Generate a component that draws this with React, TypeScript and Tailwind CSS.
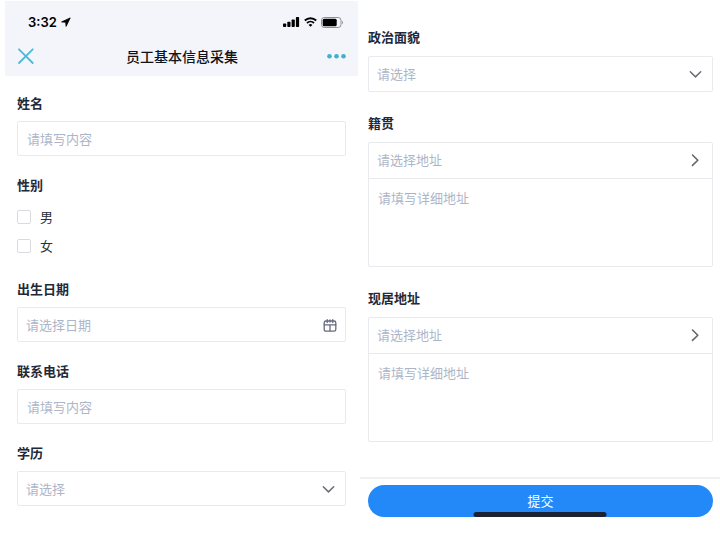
import type { ReactNode } from "react";

const fieldBox =
  "block w-full rounded-xs border border-[#e9eaed] bg-white text-[13px] text-[#adb6c8] outline-none placeholder:text-[#adb6c8] placeholder:opacity-100";

function ChevronDown() {
  return (
    <svg
      className="pointer-events-none absolute top-1/2 right-2.5 h-3.5 w-3.5 -translate-y-1/2"
      viewBox="0 0 14 14"
      fill="none"
      stroke="#6b6e76"
      strokeWidth="1.5"
      strokeLinecap="round"
      strokeLinejoin="round"
      aria-hidden="true"
    >
      <path d="M1.3 4.7 6.5 9.9 11.7 4.7" />
    </svg>
  );
}

function ChevronRight() {
  return (
    <svg
      className="h-3.5 w-3.5"
      viewBox="0 0 14 14"
      fill="none"
      stroke="#63666d"
      strokeWidth="1.6"
      strokeLinecap="round"
      strokeLinejoin="round"
      aria-hidden="true"
    >
      <path d="M4.5 2 9.8 7.2 4.5 12.4" />
    </svg>
  );
}

function Label({ id, children }: { id: string; children: ReactNode }) {
  return (
    <label htmlFor={id} className="block text-[13px] leading-5 font-bold text-[#1f2937]">
      {children}
    </label>
  );
}

function TextField({ id, label }: { id: string; label: string }) {
  return (
    <div className="flex flex-col gap-2">
      <Label id={id}>{label}</Label>
      <input id={id} type="text" placeholder="请填写内容" className={`${fieldBox} h-[35px] px-[9px] pb-px`} />
    </div>
  );
}

function SelectBox({ id, className }: { id: string; className: string }) {
  return (
    <div className="relative">
      <select id={id} className={`${fieldBox} ${className} appearance-none px-2`} defaultValue="">
        <option value="">请选择</option>
      </select>
      <ChevronDown />
    </div>
  );
}

function AddressField({ id, label }: { id: string; label: string }) {
  return (
    <div className="flex flex-col gap-[9px]">
      <Label id={id}>{label}</Label>
      <div className="rounded-xs border border-[#e9eaed] text-[13px] text-[#adb6c8]">
        <button
          type="button"
          className="flex h-9 w-full items-center justify-between border-b border-[#e9eaed] pr-2.5 pb-0.5 pl-2"
        >
          <span>请选择地址</span>
          <ChevronRight />
        </button>
        <textarea
          id={id}
          placeholder="请填写详细地址"
          className="block h-[87px] w-full resize-none px-[9px] py-[9px] leading-5 outline-none placeholder:text-[#adb6c8] placeholder:opacity-100"
        />
      </div>
    </div>
  );
}

function StatusBar() {
  return (
    <div className="flex h-[38px] items-center justify-between pt-1 pr-3.5 pl-[23px] text-black">
      <div className="flex items-center gap-1">
        <span className="font-[Inter,sans-serif] text-[13px] leading-5 font-semibold">3:32</span>
        <svg className="h-2.5 w-2.5" viewBox="0 0 10 10" aria-hidden="true">
          <path d="M9.2.9.6 4.9l4.1.4.4 4.1z" fill="#000" stroke="#000" strokeWidth=".8" strokeLinejoin="round" />
        </svg>
      </div>
      <div className="flex items-center gap-1">
        <svg className="h-2.5 w-[17px]" viewBox="0 0 17 10" aria-hidden="true">
          <rect x="0" y="6.6" width="3.2" height="3.4" rx=".7" />
          <rect x="4.3" y="4.8" width="3.2" height="5.2" rx=".7" />
          <rect x="8.6" y="2.6" width="3.2" height="7.4" rx=".7" />
          <rect x="12.9" y="0" width="3.2" height="10" rx=".7" />
        </svg>
        <svg className="h-2.5 w-[13px]" viewBox="0 0 13 10" fill="none" stroke="#000" aria-hidden="true">
          <path d="M.8 3.5a8.2 8.2 0 0 1 11.4 0" strokeWidth="1.9" />
          <path d="M3 6a5 5 0 0 1 7 0" strokeWidth="1.8" />
          <path d="M6.5 9.8 4.6 7.9a2.8 2.8 0 0 1 3.8 0z" fill="#000" stroke="none" />
        </svg>
        <svg className="h-[11px] w-[23px]" viewBox="0 0 23 11" aria-hidden="true">
          <rect x=".5" y=".5" width="19.5" height="10" rx="2.8" fill="none" stroke="#8d8f96" />
          <rect x="1.7" y="1.7" width="14" height="7.6" rx="1.5" />
          <path d="M21.2 3.8c1.2.5 1.2 2.9 0 3.4z" fill="#8d8f96" />
        </svg>
      </div>
    </div>
  );
}

function NavBar() {
  return (
    <div className="flex h-[37px] items-center justify-between pr-[11px] pb-[3px] pl-3">
      <button type="button" aria-label="关闭" className="flex w-5 items-center">
        <svg className="h-[18px] w-[18px]" viewBox="0 0 18 18" stroke="#4cb8da" strokeWidth="1.8" strokeLinecap="round" aria-hidden="true">
          <path d="M2 2.3 15.7 16M15.7 2.3 2 16" />
        </svg>
      </button>
      <h1 className="text-[14px] leading-5 font-medium text-[#111318]">员工基本信息采集</h1>
      <button type="button" aria-label="更多" className="flex w-5 items-center">
        <svg className="h-1.5 w-5" viewBox="0 0 20 6" fill="#3fb0cd" aria-hidden="true">
          <circle cx="2.5" cy="3.2" r="2.3" />
          <circle cx="9.5" cy="3.2" r="2.3" />
          <circle cx="16.5" cy="3.2" r="2.3" />
        </svg>
      </button>
    </div>
  );
}

function CheckRow({ id, label }: { id: string; label: string }) {
  return (
    <div className="flex h-7 items-center gap-[9px]">
      <input
        id={id}
        type="checkbox"
        className="h-3.5 w-3.5 appearance-none rounded-xs border border-[#d9dbdf] bg-white checked:bg-[#2389f8]"
      />
      <label htmlFor={id} className="text-[13px] leading-5 text-[#2b313b]">
        {label}
      </label>
    </div>
  );
}

function DateField() {
  return (
    <div className="flex flex-col gap-2">
      <Label id="birth">出生日期</Label>
      <div className="relative">
        <input id="birth" type="text" placeholder="请选择日期" className={`${fieldBox} h-[35px] px-2`} />
        <svg
          className="pointer-events-none absolute top-1/2 right-[9px] h-3.5 w-3.5 -translate-y-1/2"
          viewBox="0 0 14 14"
          fill="none"
          stroke="#666b7d"
          strokeWidth="1.3"
          strokeLinecap="round"
          aria-hidden="true"
        >
          <rect x="1.2" y="3" width="11.6" height="10.2" rx="1.8" />
          <path d="M1.2 6.8h11.6M4.2 1.6v3M9.8 1.6v3M7 6.8v6" />
          <path d="M7 2v2" />
        </svg>
      </div>
    </div>
  );
}

export default function App() {
  return (
    <form className="grid min-h-screen grid-cols-2 bg-white font-['Noto_Sans_CJK_SC',sans-serif]">
      <section className="pt-px pr-0.5 pl-[5px]">
        <header className="bg-[#f4f5fa]">
          <StatusBar />
          <NavBar />
        </header>
        <div className="flex flex-col gap-[19px] px-3 pt-[17px]">
          <TextField id="name" label="姓名" />
          <fieldset className="flex flex-col">
            <legend className="mb-2 text-[13px] leading-5 font-bold text-[#1f2937]">性别</legend>
            <div className="flex flex-col gap-px">
              <CheckRow id="male" label="男" />
              <CheckRow id="female" label="女" />
            </div>
          </fieldset>
          <DateField />
          <TextField id="phone" label="联系电话" />
          <div className="flex flex-col gap-2">
            <Label id="education">学历</Label>
            <SelectBox id="education" className="h-[35px]" />
          </div>
        </div>
      </section>

      <section className="flex flex-col">
        <div className="flex flex-col gap-[21px] pt-[27px] pr-[7px] pb-[35px] pl-2">
          <div className="flex flex-col gap-[9px]">
            <Label id="politics">政治面貌</Label>
            <SelectBox id="politics" className="h-9" />
          </div>
          <AddressField id="origin" label="籍贯" />
          <AddressField id="residence" label="现居地址" />
        </div>
        <footer className="relative border-t-2 border-[#f0f0f1] pt-1.5 pr-[7px] pl-2">
          <button
            type="submit"
            className="block h-8 w-full rounded-full bg-[#2389f8] text-[13px] leading-8 text-white"
          >
            提交
          </button>
          <div className="absolute bottom-0 left-1/2 h-[5px] w-[133px] -translate-x-1/2 rounded-full bg-[#1b2233]" />
        </footer>
      </section>
    </form>
  );
}
